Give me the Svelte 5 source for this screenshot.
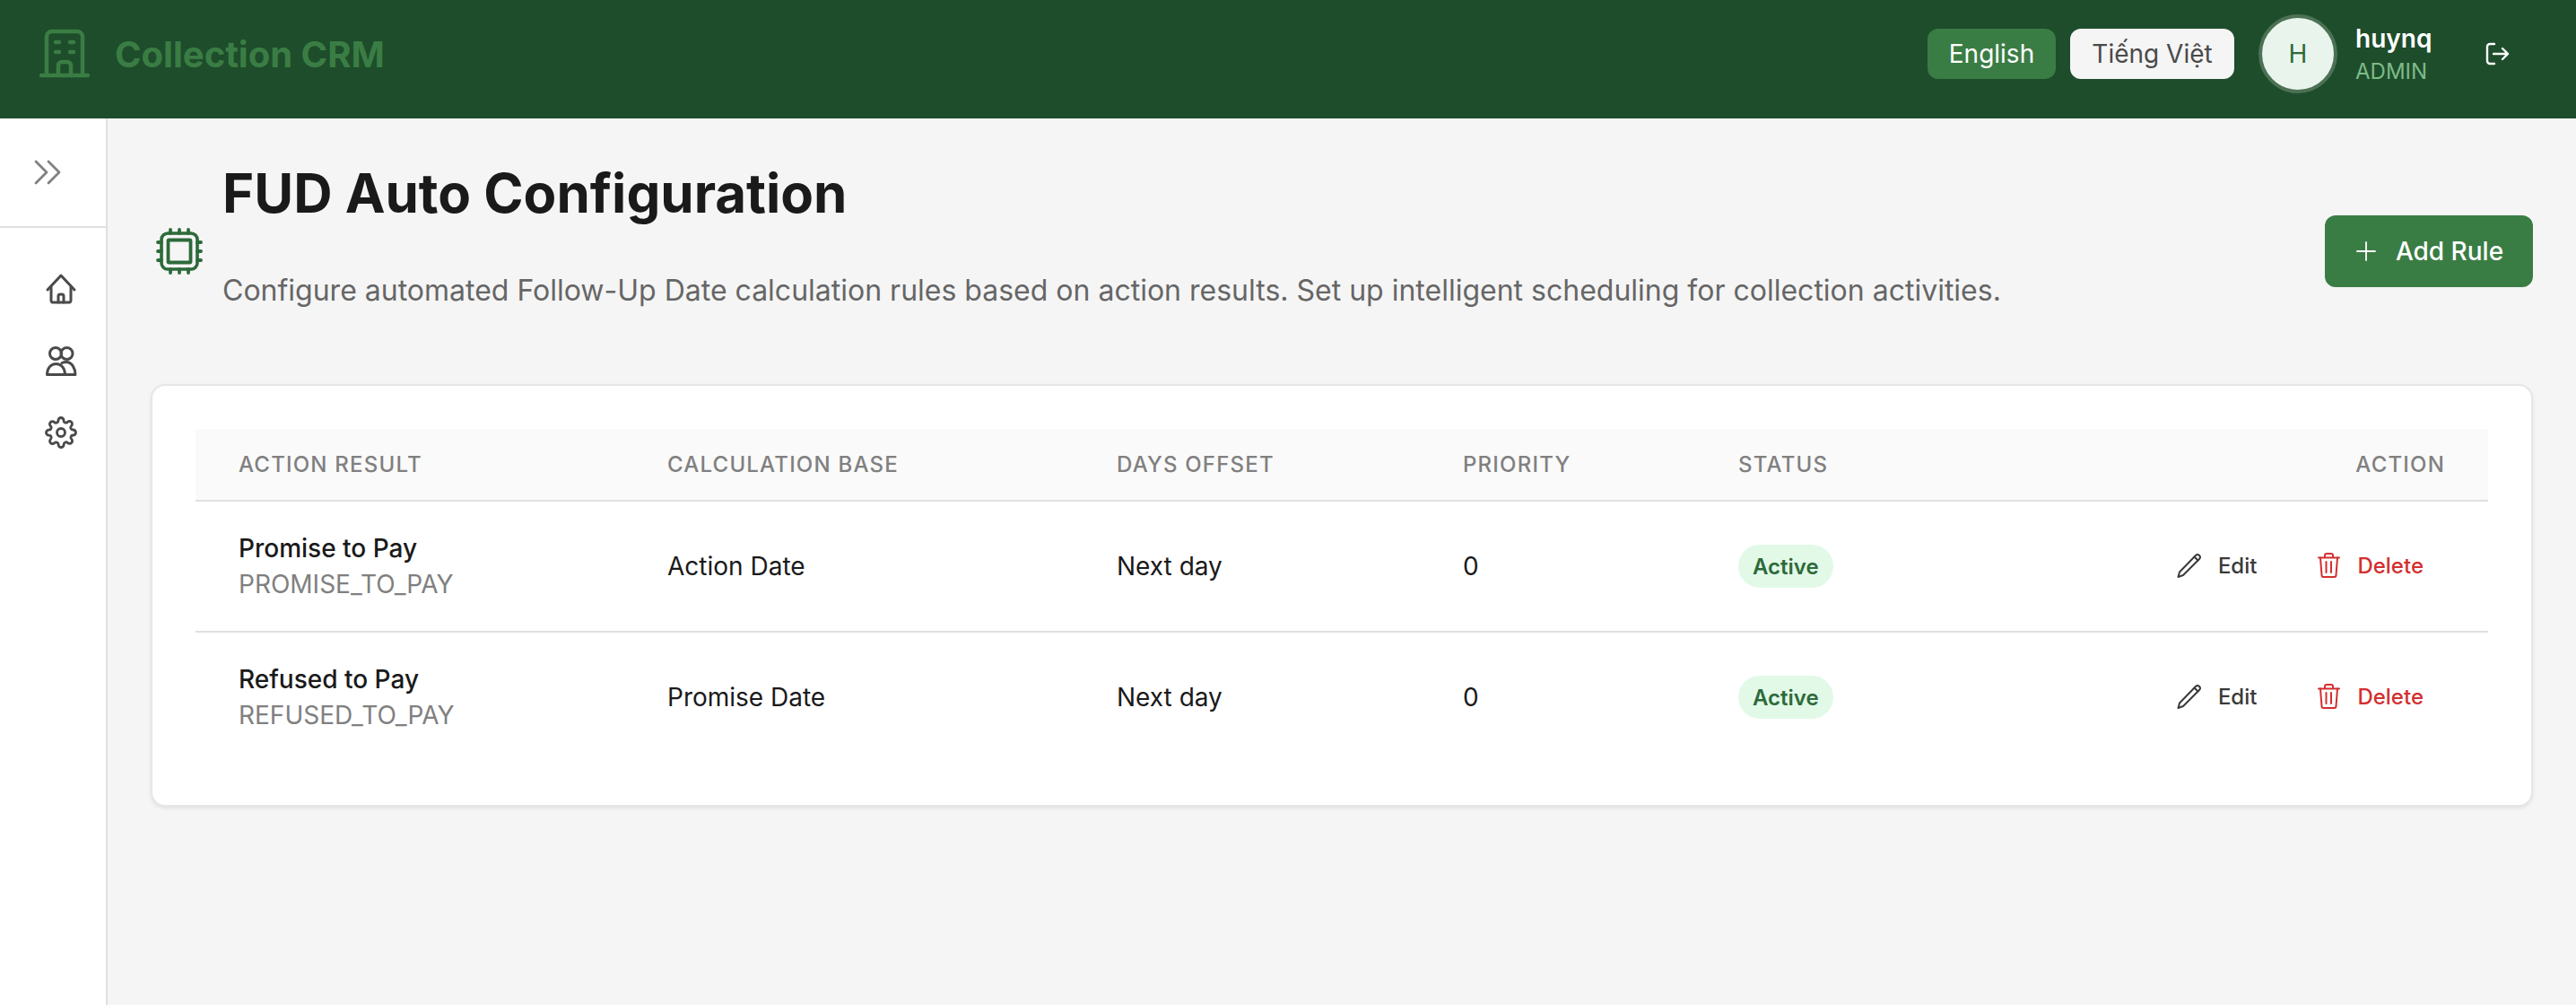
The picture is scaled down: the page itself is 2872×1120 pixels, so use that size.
<script>
  const rules = [
    { name: 'Promise to Pay', code: 'PROMISE_TO_PAY', base: 'Action Date' },
    { name: 'Refused to Pay', code: 'REFUSED_TO_PAY', base: 'Promise Date' }
  ];
</script>

<div class="shell">
  <header class="top">
    <div class="brand">
      <svg class="logo" viewBox="0 0 56 56" fill="none" stroke="currentColor" stroke-width="4.500" stroke-linecap="round" stroke-linejoin="round">
        <path d="M8 52V9a6 6 0 0 1 6-6h28a6 6 0 0 1 6 6v43" />
        <path d="M2 52h52" />
        <path d="M21 52V41a4 4 0 0 1 4-4h6a4 4 0 0 1 4 4v11" />
        <path d="M18 15h4M34 15h4M18 26h4M34 26h4" />
      </svg>
      <span class="brand-name">Collection CRM</span>
    </div>
    <div class="top-right">
      <button class="lang on">English</button>
      <button class="lang off">Tiếng Việt</button>
      <div class="avatar">H</div>
      <div class="who">
        <div class="uname">huynq</div>
        <div class="role">ADMIN</div>
      </div>
      <svg class="logout" viewBox="0 0 28 28" fill="none" stroke="currentColor" stroke-width="2.400" stroke-linecap="round" stroke-linejoin="round">
        <path d="M11 3H6a3 3 0 0 0-3 3v16a3 3 0 0 0 3 3h5" />
        <path d="M10 14h16M20 8l6 6-6 6" />
      </svg>
    </div>
  </header>

  <div class="body">
    <aside class="side">
      <div class="toggle">
        <svg class="chev" viewBox="0 0 30 28" fill="none" stroke="currentColor" stroke-width="2.800" stroke-linecap="round" stroke-linejoin="round">
          <path d="M2 2l12 12L2 26M16 2l12 12-12 12" />
        </svg>
      </div>
      <nav class="nav">
        <svg class="nav-ic" viewBox="0 0 36 36" fill="none" stroke="currentColor" stroke-width="3" stroke-linecap="round" stroke-linejoin="round">
          <path d="M3 19L18 3l15 16" />
          <path d="M7 16v15a3 3 0 0 0 1 2h20a3 3 0 0 0 1-2V16" />
          <path d="M15 33v-7a2 2 0 0 1 2-2h2a2 2 0 0 1 2 2v7" />
        </svg>
        <svg class="nav-ic" viewBox="0 0 36 36" fill="none" stroke="currentColor" stroke-width="3" stroke-linecap="round" stroke-linejoin="round">
          <circle cx="12" cy="10" r="6.500" />
          <circle cx="24.500" cy="10" r="6.500" />
          <path d="M2.500 33.500c0-7 4-12 10-12s10 5 10 12z" />
          <path d="M19 20.500c1.500-.8 3-1 5-1 6 0 10 7 10 14H22.500" />
        </svg>
        <svg class="nav-ic" viewBox="0 0 24 24" fill="none" stroke="currentColor" stroke-width="1.900" stroke-linecap="round" stroke-linejoin="round">
          <circle cx="12" cy="12" r="3" />
          <path d="M19.400 15a1.650 1.650 0 0 0 .33 1.820l.06.06a2 2 0 1 1-2.830 2.830l-.06-.06a1.650 1.650 0 0 0-1.820-.33 1.650 1.650 0 0 0-1 1.510V21a2 2 0 0 1-4 0v-.09A1.650 1.650 0 0 0 9 19.400a1.650 1.650 0 0 0-1.820.33l-.06.06a2 2 0 1 1-2.830-2.830l.06-.06a1.650 1.650 0 0 0 .33-1.820 1.650 1.650 0 0 0-1.510-1H3a2 2 0 0 1 0-4h.09A1.650 1.650 0 0 0 4.600 9a1.650 1.650 0 0 0-.33-1.820l-.06-.06a2 2 0 1 1 2.830-2.830l.06.06a1.650 1.650 0 0 0 1.820.33H9a1.650 1.650 0 0 0 1-1.510V3a2 2 0 0 1 4 0v.09a1.650 1.650 0 0 0 1 1.510 1.650 1.650 0 0 0 1.820-.33l.06-.06a2 2 0 1 1 2.830 2.830l-.06.06a1.650 1.650 0 0 0-.33 1.820V9a1.650 1.650 0 0 0 1.510 1H21a2 2 0 0 1 0 4h-.09a1.650 1.650 0 0 0-1.510 1z" />
        </svg>
      </nav>
    </aside>

    <main class="main">
      <section class="head">
        <svg class="chip" viewBox="0 0 52 52" fill="none" stroke="currentColor" stroke-linecap="round" stroke-linejoin="round">
          <rect x="6" y="6" width="40" height="40" rx="7" stroke-width="3.600" />
          <rect x="13.500" y="13.500" width="25" height="25" rx="1" stroke-width="3.800" />
          <path stroke-width="3.800" d="M16 2v4M26 2v4M36 2v4M16 46v4M26 46v4M36 46v4M2 16h4M2 26h4M2 36h4M46 16h4M46 26h4M46 36h4" />
        </svg>
        <div class="titles">
          <h1>FUD Auto Configuration</h1>
          <p>Configure automated Follow-Up Date calculation rules based on action results. Set up intelligent scheduling for collection activities.</p>
        </div>
        <button class="add">
          <svg class="plus" viewBox="0 0 22 22" fill="none" stroke="currentColor" stroke-width="1.800" stroke-linecap="round">
            <path d="M11 1v20M1 11h20" />
          </svg>
          Add Rule
        </button>
      </section>

      <section class="card">
        <table>
          <colgroup>
            <col class="c1" /><col class="c2" /><col class="c3" /><col class="c4" /><col class="c5" /><col />
          </colgroup>
          <thead>
            <tr>
              <th>ACTION RESULT</th>
              <th>CALCULATION BASE</th>
              <th>DAYS OFFSET</th>
              <th>PRIORITY</th>
              <th>STATUS</th>
              <th class="right">ACTION</th>
            </tr>
          </thead>
          <tbody>
            {#each rules as r, i}
              <tr class:last={i === rules.length - 1}>
                <td>
                  <div class="name">{r.name}</div>
                  <div class="code">{r.code}</div>
                </td>
                <td>{r.base}</td>
                <td>Next day</td>
                <td>0</td>
                <td><span class="badge">Active</span></td>
                <td>
                  <div class="acts">
                    <button class="act edit">
                      <svg class="act-ic" viewBox="0 0 28 28" fill="none" stroke="currentColor" stroke-width="2" stroke-linecap="round" stroke-linejoin="round">
                        <path d="M1.500 27l1.500-5.500L21 3a2.700 2.700 0 0 1 4 4L7 25z" />
                        <path d="M19.500 4.500l4 4" />
                      </svg>
                      Edit
                    </button>
                    <button class="act del">
                      <svg class="act-ic" viewBox="0 0 28 28" fill="none" stroke="currentColor" stroke-width="2" stroke-linecap="round" stroke-linejoin="round">
                        <path d="M3 5.500h23" />
                        <path d="M10 5V3A2 2 0 0 1 12 1h5a2 2 0 0 1 2 2v2" />
                        <path d="M5 5.500l1.500 19.500a2 2 0 0 0 2 2h12a2 2 0 0 0 2-2l1.500-19.500" />
                        <path d="M11.500 10v12M17 10v12" />
                      </svg>
                      Delete
                    </button>
                  </div>
                </td>
              </tr>
            {/each}
          </tbody>
        </table>
      </section>
    </main>
  </div>
</div>

<style>
  :global(body) {
    margin: 0;
    background: #f5f5f5;
  }
  .shell {
    font-family: Inter, "Noto Sans", sans-serif;
    height: 1120px;
    display: flex;
    flex-direction: column;
    color: #1a1a1a;
  }
  button {
    font-family: inherit;
    border: none;
    cursor: pointer;
  }
  .top {
    height: 132px;
    flex: none;
    background: #1e4d2b;
    display: flex;
    align-items: center;
    justify-content: space-between;
    padding: 0 74px 12px 44px;
    box-sizing: border-box;
  }
  .brand {
    display: flex;
    align-items: center;
    gap: 28px;
    color: #3a7d44;
  }
  .logo {
    width: 56px;
    height: 56px;
  }
  .brand-name {
    font-size: 40px;
    font-weight: 700;
  }
  .top-right {
    display: flex;
    align-items: center;
  }
  .lang {
    height: 56px;
    font-size: 28px;
    border-radius: 12px;
    padding: 0;
  }
  .on {
    width: 143px;
    background: #3a7d44;
    color: #fff;
  }
  .off {
    width: 183px;
    margin-left: 16px;
    margin-right: 27px;
    background: #f5f5f5;
    color: #4a4a4a;
  }
  .avatar {
    width: 80px;
    height: 80px;
    border-radius: 50%;
    background: #e9f5ec;
    border: 4px solid #4c7155;
    color: #2d6a3a;
    font-size: 28px;
    display: flex;
    align-items: center;
    justify-content: center;
  }
  .who {
    margin-left: 20px;
    width: 144px;
  }
  .uname {
    font-size: 28px;
    font-weight: 600;
    line-height: 34px;
    color: #fff;
  }
  .role {
    font-size: 24px;
    line-height: 30px;
    margin-top: 5px;
    color: #7dbb87;
  }
  .logout {
    width: 28px;
    height: 28px;
    color: #fff;
  }
  .body {
    flex: 1;
    display: flex;
    min-height: 0;
  }
  .side {
    width: 120px;
    flex: none;
    box-sizing: border-box;
    background: #fff;
    border-right: 2px solid #e0e0e0;
  }
  .toggle {
    height: 122px;
    box-sizing: border-box;
    border-bottom: 2px solid #e0e0e0;
    padding-left: 38px;
    display: flex;
    align-items: center;
    color: #808080;
  }
  .chev {
    width: 30px;
    height: 28px;
  }
  .nav {
    display: flex;
    flex-direction: column;
    padding: 50px 0 0 50px;
    gap: 44px;
    color: #4a4a4a;
  }
  .nav-ic {
    width: 36px;
    height: 36px;
  }
  .main {
    flex: 1;
    min-width: 0;
    padding: 48px;
    box-sizing: border-box;
  }
  .head {
    display: flex;
    align-items: center;
    height: 200px;
    margin-bottom: 48px;
  }
  .chip {
    width: 52px;
    height: 52px;
    margin: 0 22px 0 6px;
    color: #2d6a3a;
    flex: none;
  }
  .titles {
    flex: 1;
    padding-bottom: 33px;
  }
  h1 {
    margin: 0 0 49px;
    font-size: 60px;
    line-height: 72px;
    font-weight: 700;
    color: #1a1a1a;
  }
  .titles p {
    margin: 0;
    font-size: 32px;
    line-height: 48px;
    color: #666;
  }
  .add {
    width: 232px;
    height: 80px;
    border-radius: 12px;
    background: #3a7d44;
    color: #fff;
    font-size: 28px;
    font-weight: 500;
    display: flex;
    align-items: center;
    justify-content: center;
    gap: 22px;
    padding: 0 0 0 2px;
  }
  .plus {
    width: 22px;
    height: 22px;
  }
  .card {
    background: #fff;
    border: 2px solid #e6e6e6;
    border-radius: 16px;
    padding: 48px;
    box-shadow: 0 2px 4px rgba(0, 0, 0, 0.08);
  }
  table {
    width: 100%;
    border-collapse: collapse;
    table-layout: fixed;
    font-size: 28px;
  }
  .c1 { width: 478px; }
  .c2 { width: 501px; }
  .c3 { width: 386px; }
  .c4 { width: 307px; }
  .c5 { width: 400px; }
  th {
    height: 79px;
    padding: 0 48px;
    text-align: left;
    background: #fafafa;
    border-bottom: 2px solid #e0e0e0;
    color: #808080;
    font-size: 24px;
    font-weight: 500;
    letter-spacing: 1.200px;
    white-space: nowrap;
  }
  th.right {
    text-align: right;
  }
  td {
    height: 144px;
    padding: 0 48px;
    border-bottom: 2px solid #e0e0e0;
    color: #1a1a1a;
    white-space: nowrap;
  }
  tr.last td {
    border-bottom: none;
  }
  .name {
    font-weight: 500;
    line-height: 40px;
  }
  .code {
    line-height: 40px;
    color: #808080;
  }
  .badge {
    display: inline-flex;
    align-items: center;
    height: 48px;
    padding: 0 16px;
    border-radius: 24px;
    background: #e2f9e8;
    color: #2d6a3a;
    font-size: 24px;
    font-weight: 600;
    vertical-align: middle;
  }
  .acts {
    display: flex;
    justify-content: flex-end;
    gap: 18px;
    margin-top: -2px;
  }
  .act {
    display: flex;
    align-items: center;
    background: none;
    font-size: 24px;
    font-weight: 500;
    padding: 0 24px;
    height: 48px;
    gap: 18px;
  }
  .edit {
    color: #3a3a3a;
  }
  .del {
    color: #d32f2f;
  }
  .act-ic {
    width: 28px;
    height: 28px;
    flex: none;
  }
</style>
